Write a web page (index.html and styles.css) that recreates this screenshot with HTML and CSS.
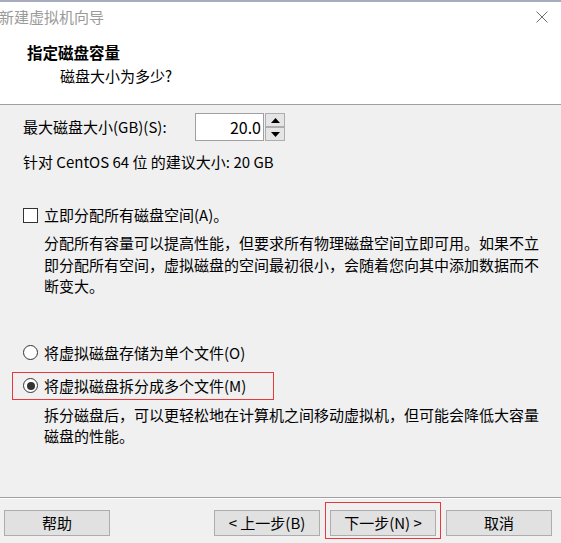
FILE: index.html
```html
<!DOCTYPE html>
<html lang="zh-CN">
<head>
<meta charset="utf-8">
<title>新建虚拟机向导</title>
<link rel="stylesheet" href="styles.css">
</head>
<body>
<div class="window">
  <div class="header">
    <div class="titlebar">
      <span class="title">新建虚拟机向导</span>
      <svg class="close" width="12" height="12" viewBox="0 0 12 12"><path d="M0.5 0.5 L11.5 11.5 M11.5 0.5 L0.5 11.5" stroke="#6e6e6e" stroke-width="1" fill="none"/></svg>
    </div>
    <div class="heading">指定磁盘容量</div>
    <div class="sub">磁盘大小为多少?</div>
  </div>
  <div class="body">
    <div class="size-row">
      <span class="label">最大磁盘大小(GB)(S):</span>
      <div class="spinner">
        <div class="spin-input">20.0</div>
        <div class="spin-buttons">
          <div class="spin-btn"><svg width="9" height="5" viewBox="0 0 9 5"><path d="M4.5 0 L9 5 L0 5 Z" fill="#000"/></svg></div>
          <div class="spin-btn"><svg width="9" height="5" viewBox="0 0 9 5"><path d="M0 0 L9 0 L4.5 5 Z" fill="#000"/></svg></div>
        </div>
      </div>
    </div>
    <div class="hint">针对 CentOS 64 位 的建议大小: 20 GB</div>
    <div class="check-row">
      <span class="checkbox"></span>
      <span>立即分配所有磁盘空间(A)。</span>
    </div>
    <p class="desc desc-alloc">分配所有容量可以提高性能，但要求所有物理磁盘空间立即可用。如果不立即分配所有空间，虚拟磁盘的空间最初很小，会随着您向其中添加数据而不断变大。</p>
    <div class="radio-row first">
      <span class="radio"></span>
      <span>将虚拟磁盘存储为单个文件(O)</span>
    </div>
    <div class="radio-row focused">
      <span class="radio checked"></span>
      <span>将虚拟磁盘拆分成多个文件(M)</span>
    </div>
    <p class="desc desc-split">拆分磁盘后，可以更轻松地在计算机之间移动虚拟机，但可能会降低大容量磁盘的性能。</p>
  </div>
  <div class="footer">
    <button class="btn btn-help">帮助</button>
    <div class="spacer"></div>
    <button class="btn">&lt; 上一步(B)</button>
    <div class="focus-ring"><button class="btn">下一步(N) &gt;</button></div>
    <button class="btn btn-cancel">取消</button>
  </div>
</div>
</body>
</html>
```
FILE: styles.css
```css
* { box-sizing: border-box; }
html, body {
  margin: 0;
  padding: 0;
  background: #f0f0f0;
}
body {
  font-family: "Noto Sans CJK SC", "Microsoft YaHei", sans-serif;
  font-size: 15px;
  color: #000;
}
.window {
  width: 561px;
  height: 543px;
  display: flex;
  flex-direction: column;
  overflow: hidden;
}
.header {
  height: 105px;
  background: #fff;
  border-top: 2px solid #a8abbf;
  border-bottom: 1px solid #a0a0a0;
  flex: none;
}
.titlebar {
  height: 30px;
  display: flex;
  align-items: center;
  justify-content: space-between;
  padding-right: 13px;
}
.title {
  color: #9a9a9a;
  line-height: 20px;
  margin-left: -1px;
}
.close { display: block; }
.heading {
  font-weight: bold;
  font-size: 15.5px;
  line-height: 20px;
  margin-top: 10px;
  padding-left: 27px;
}
.sub {
  line-height: 20px;
  margin-top: 4px;
  padding-left: 60px;
}
.body {
  flex: 1;
  padding-left: 23px;
}
.size-row {
  display: flex;
  align-items: center;
  margin-top: 8px;
}
.label {
  width: 172px;
  flex: none;
  line-height: 20px;
}
.spinner {
  display: flex;
  height: 28px;
}
.spin-input {
  width: 69px;
  height: 28px;
  border: 1px solid #a0a0a0;
  background: #fff;
  text-align: right;
  padding-right: 2px;
  line-height: 26px;
  font-size: 16px;
}
.spin-buttons {
  display: flex;
  flex-direction: column;
  justify-content: space-between;
  margin-left: 1px;
}
.spin-btn {
  width: 20px;
  height: 14px;
  border: 1px solid #adadad;
  background: #e5e5e5;
  display: flex;
  align-items: center;
  justify-content: center;
}
.spin-btn svg { display: block; }
.hint {
  line-height: 20px;
  margin-top: 11px;
}
.check-row {
  display: flex;
  align-items: center;
  margin-top: 33px;
  line-height: 20px;
}
.checkbox {
  width: 15px;
  height: 15px;
  border: 1px solid #333;
  background: #fff;
  margin-right: 6px;
  flex: none;
}
.desc {
  margin: 0;
  padding-left: 21px;
  line-height: 21.5px;
  width: 525px;
}
.desc-alloc {
  margin-top: 7px;
}
.radio-row {
  display: flex;
  align-items: center;
  height: 28px;
  margin-left: -11px;
  padding-left: 10px;
  border: 1px solid transparent;
  line-height: 20px;
}
.radio-row.first { margin-top: 42px; }
.radio-row.focused {
  margin-top: 5px;
  width: 262px;
  border-color: #e8383d;
}
.radio {
  width: 15px;
  height: 15px;
  border-radius: 50%;
  border: 1px solid #333;
  background: #fff;
  margin-right: 6px;
  flex: none;
  display: flex;
  align-items: center;
  justify-content: center;
}
.radio.checked::after {
  content: "";
  width: 8px;
  height: 8px;
  border-radius: 50%;
  background: #333;
}
.desc-split {
  margin-top: 4px;
}
.footer {
  height: 46px;
  flex: none;
  border-top: 1px solid #a0a0a0;
  box-shadow: inset 0 1px 0 #fdfdfd;
  display: flex;
  align-items: flex-start;
  padding: 4px 9px 0 4px;
}
.spacer { flex: 1; }
.btn {
  font-family: inherit;
  font-size: 15px;
  color: #000;
  width: 106px;
  height: 26px;
  border: 1px solid #adadad;
  background: #e1e1e1;
  padding: 0;
  margin: 8px 0 0 0;
  line-height: 24px;
  text-align: center;
}
.focus-ring {
  border: 1px solid #e8383d;
  padding: 7px 4px 2px 4px;
  margin-left: 5px;
}
.focus-ring .btn { margin: 0; display: block; }
.btn-cancel { margin-left: 5px; }
```
